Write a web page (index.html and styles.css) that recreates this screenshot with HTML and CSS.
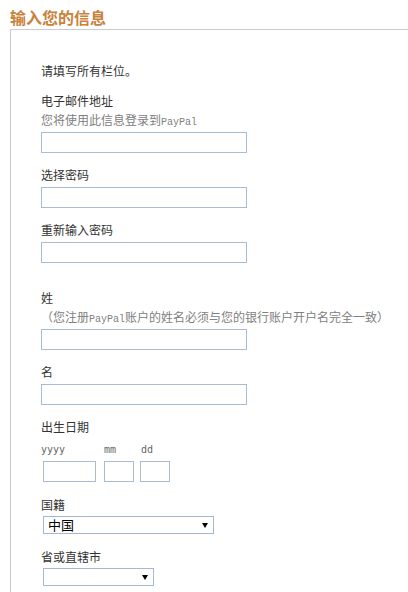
FILE: index.html
```html
<!DOCTYPE html>
<html lang="zh-CN">
<head>
  <meta charset="UTF-8" />
  <title>输入您的信息</title>
  <meta name="viewport" content="width=device-width, initial-scale=1.0" />
  <link rel="stylesheet" href="styles.css">
</head>
<body>

  <h1 class="title">输入您的信息</h1>

  <div class="panel">
    <p class="intro">请填写所有栏位。</p>

    <div class="field field-first">
      <label for="email">电子邮件地址</label>
      <div class="hint">您将使用此信息登录到<span class="latin">PayPal</span></div>
      <input type="text" id="email" class="text-input" />
    </div>

    <div class="field">
      <label for="pw">选择密码</label>
      <input type="password" id="pw" class="text-input" />
    </div>

    <div class="field">
      <label for="pw2">重新输入密码</label>
      <input type="password" id="pw2" class="text-input" />
    </div>

    <div class="field field-gap">
      <label for="lastname">姓</label>
      <div class="hint">（您注册<span class="latin">PayPal</span>账户的姓名必须与您的银行账户开户名完全一致）</div>
      <input type="text" id="lastname" class="text-input" />
    </div>

    <div class="field">
      <label for="firstname">名</label>
      <input type="text" id="firstname" class="text-input" />
    </div>

    <div class="field">
      <label for="yyyy">出生日期</label>
      <div class="date-row">
        <div class="date-col date-year">
          <span class="date-label">yyyy</span>
          <input type="text" id="yyyy" class="date-input" />
        </div>
        <div class="date-col date-month">
          <span class="date-label">mm</span>
          <input type="text" id="mm" class="date-input" />
        </div>
        <div class="date-col date-day">
          <span class="date-label">dd</span>
          <input type="text" id="dd" class="date-input" />
        </div>
      </div>
    </div>

    <div class="field field-select">
      <label for="country">国籍</label>
      <span class="select-wrap">
        <select id="country" class="select select-wide">
          <option>中国</option>
        </select>
      </span>
    </div>

    <div class="field field-select">
      <label for="province">省或直辖市</label>
      <span class="select-wrap">
        <select id="province" class="select select-narrow">
          <option></option>
        </select>
      </span>
    </div>
  </div>

</body>
</html>
```

FILE: styles.css
```css
body {
  margin: 0;
  font-family: "Noto Sans CJK SC", "Liberation Sans", sans-serif;
  font-size: 12px;
  color: #333;
  background: #fff;
}

.title {
  margin: 0 0 1px 0;
  padding: 6px 0 0 10px;
  font-size: 16px;
  line-height: 22px;
  font-weight: bold;
  color: #c9823c;
}

.panel {
  margin-left: 10px;
  border-top: 1px solid #ccc;
  border-left: 1px solid #ccc;
  padding: 32px 0 6px 30px;
}

.intro {
  margin: 0;
  line-height: 18px;
}

.field {
  margin-top: 13px;
}

.field-first {
  margin-top: 12px;
}

.field-gap {
  margin-top: 26px;
}

.field-select {
  margin-top: 14px;
}

.field label {
  display: block;
  height: 18px;
  line-height: 18px;
}

.hint {
  height: 18px;
  margin-top: 1px;
  line-height: 18px;
  color: #808080;
  white-space: nowrap;
}

.latin {
  font-family: "Liberation Mono", monospace;
  font-size: 10px;
  line-height: 10px;
}

.text-input {
  display: block;
  width: 206px;
  height: 21px;
  margin-top: 3px;
  padding: 0 3px;
  border: 1px solid #a7bdd6;
  box-sizing: border-box;
  background: #fff;
}

.date-row {
  display: flex;
  margin-top: 7px;
}

.date-col {
  display: flex;
  flex-direction: column;
}

.date-year {
  width: 63px;
}

.date-month {
  width: 36px;
}

.date-label {
  height: 14px;
  font-family: "DejaVu Sans Mono", monospace;
  font-size: 10px;
  line-height: 14px;
  color: #666;
}

.date-input {
  width: 30px;
  height: 21px;
  margin-top: 4px;
  padding: 0 2px;
  border: 1px solid #a7bdd6;
  box-sizing: border-box;
  background: #fff;
}

.date-year .date-input {
  width: 53px;
  margin-left: 2px;
}

.date-day .date-label {
  padding-left: 1px;
}

.select-wrap {
  position: relative;
  display: block;
  width: max-content;
  margin: 2px 0 0 2px;
}

.select-wrap::after {
  content: "";
  position: absolute;
  right: 6px;
  top: 7px;
  border-left: 3px solid transparent;
  border-right: 3px solid transparent;
  border-top: 5px solid #000;
  pointer-events: none;
}

.select {
  display: block;
  -webkit-appearance: none;
  appearance: none;
  height: 18px;
  margin: 0;
  padding: 0 0 0 4px;
  border: 1px solid #a5b9cd;
  border-radius: 0;
  box-sizing: border-box;
  background: #fff;
  font-family: "Noto Sans CJK SC", sans-serif;
  font-size: 13px;
  line-height: 16px;
  color: #000;
}

.select-wide {
  width: 171px;
}

.select-narrow {
  width: 111px;
}
```
